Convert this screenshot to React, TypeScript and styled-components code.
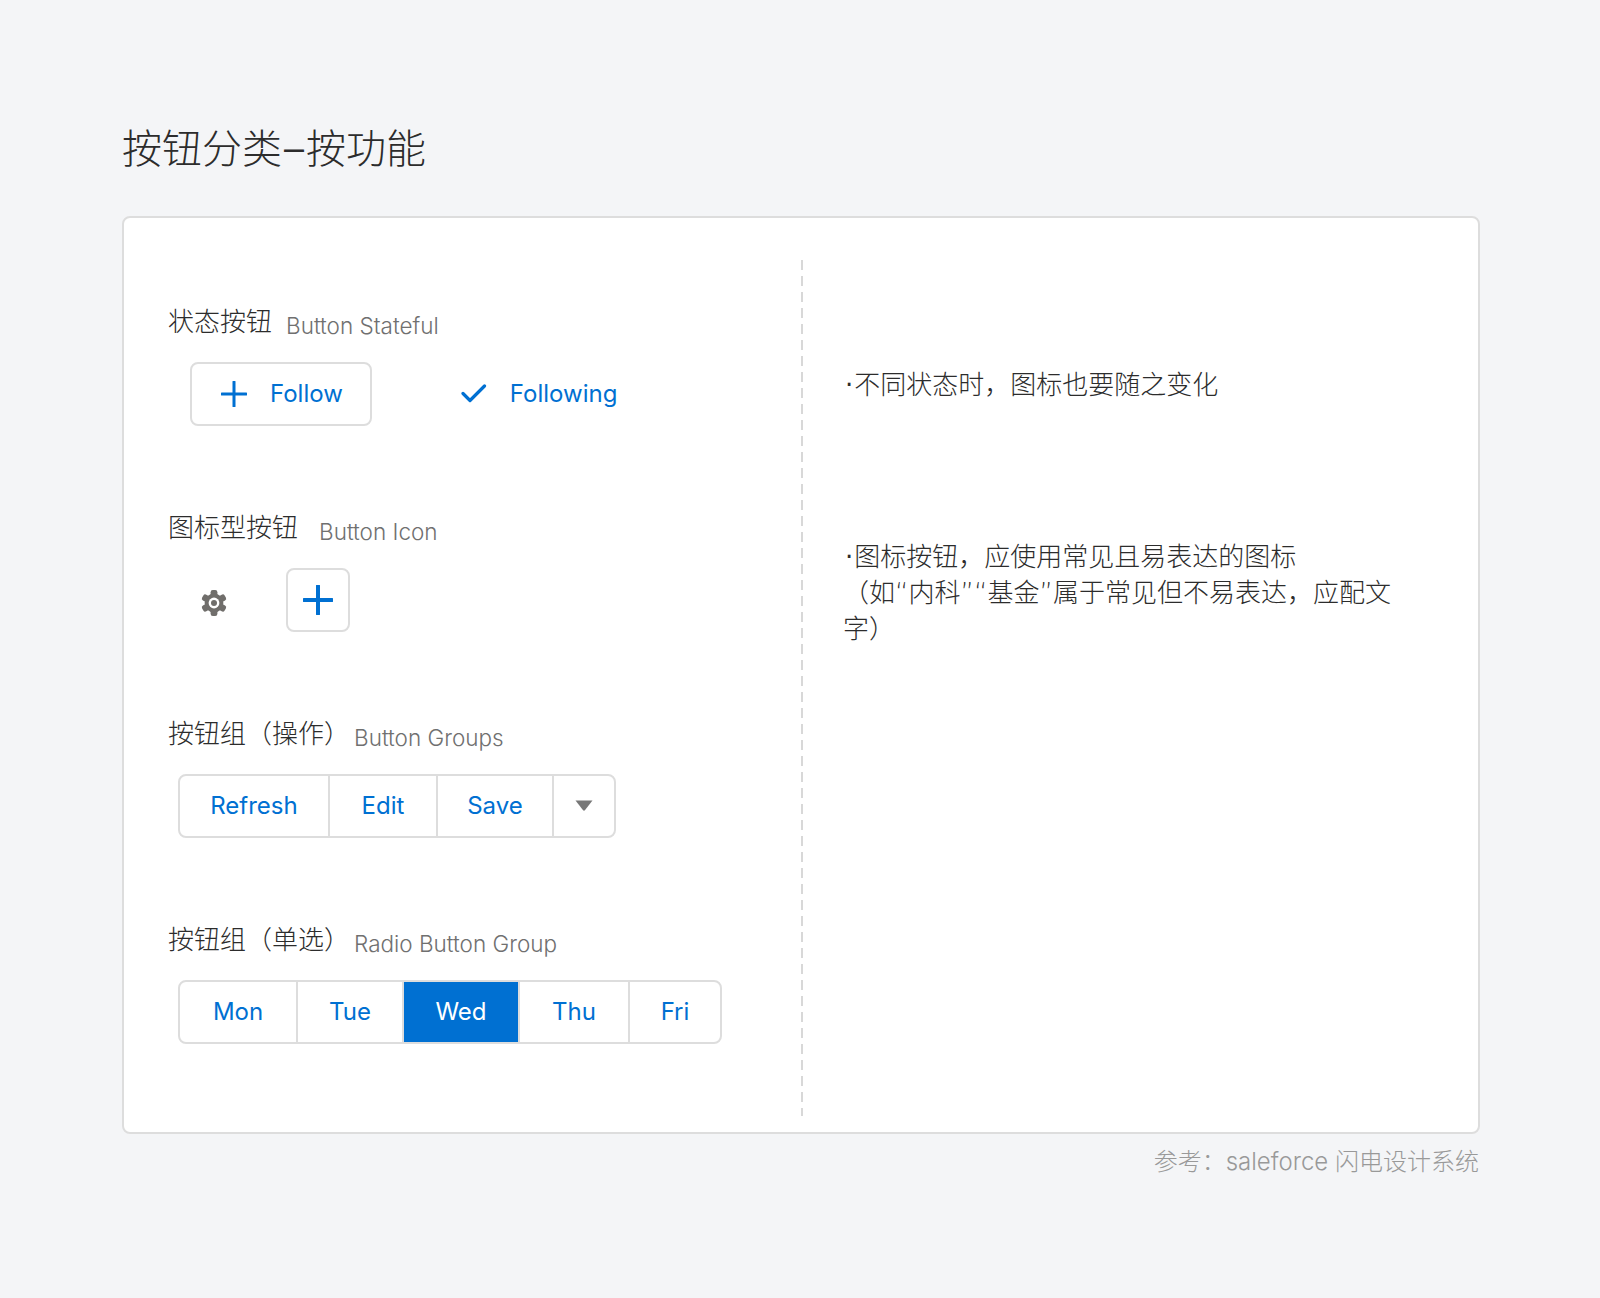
import styled, { createGlobalStyle } from "styled-components";

const GlobalStyle = createGlobalStyle`
  html, body {
    margin: 0;
    padding: 0;
    background: #f4f5f7;
  }
  body {
    font-family: "Inter", "Noto Sans CJK SC", sans-serif;
    -webkit-font-smoothing: antialiased;
  }
`;

const BLUE = "#0070d2";
const LINE = "#dddddd";
const INK = "#2c2c2c";

const Page = styled.div`
  width: 1600px;
  height: 1298px;
  box-sizing: border-box;
  padding: 120px 120px 0 122px;
`;

const Title = styled.h1`
  margin: 0 0 38px;
  height: 58px;
  font-size: 40px;
  line-height: 58px;
  font-weight: 300;
  color: ${INK};
`;

const TitleDash = styled.span`
  margin: 0 2px;
`;

const Card = styled.div`
  box-sizing: border-box;
  height: 918px;
  display: grid;
  grid-template-columns: 677px 2px 1fr;
  grid-template-rows: 856px;
  background: #ffffff;
  border: 2px solid ${LINE};
  border-radius: 8px;
  padding: 42px 0 16px;
`;

const LeftColumn = styled.div`
  padding: 42px 0 0 44px;
`;

const Divider = styled.div`
  background: repeating-linear-gradient(
    to bottom,
    #d8d8d8 0,
    #d8d8d8 10px,
    transparent 10px,
    transparent 16px
  );
`;

const RightColumn = styled.div`
  padding: 107px 75px 0 40px;
`;

const Section = styled.section`
  height: 206px;
`;

const Heading = styled.div`
  display: flex;
  align-items: flex-start;
  height: 60px;
`;

const HeadingCn = styled.span`
  font-size: 26px;
  line-height: 40px;
  font-weight: 300;
  color: ${INK};
`;

const HeadingEn = styled.span<{ $gap: number }>`
  margin: 4px 0 0 ${(p) => p.$gap}px;
  font-size: 22.5px;
  line-height: 40px;
  font-weight: 300;
  color: #707070;
`;

const Row = styled.div<{ $indent: number }>`
  display: flex;
  align-items: center;
  margin-left: ${(p) => p.$indent}px;
`;

const StateButton = styled.div<{ $outlined?: boolean }>`
  box-sizing: border-box;
  height: 64px;
  display: flex;
  align-items: center;
  gap: 23px;
  padding: 0 27px 1px 29px;
  margin-right: 58px;
  border: 2px solid ${(p) => (p.$outlined ? LINE : "transparent")};
  border-radius: 8px;
  font-size: 24px;
  font-weight: 400;
  color: ${BLUE};
`;

const GearSlot = styled.div`
  width: 72px;
  height: 64px;
  margin-right: 36px;
  padding-top: 6px;
  box-sizing: border-box;
  display: flex;
  align-items: center;
  justify-content: center;
`;

const IconButton = styled.div`
  box-sizing: border-box;
  width: 64px;
  height: 64px;
  display: flex;
  align-items: center;
  justify-content: center;
  border: 2px solid ${LINE};
  border-radius: 8px;
`;

const Group = styled.div`
  display: inline-flex;
  height: 64px;
  box-sizing: border-box;
  border: 2px solid ${LINE};
  border-radius: 8px;
  overflow: hidden;
`;

const Segment = styled.div<{ $active?: boolean; $width: number }>`
  box-sizing: border-box;
  width: ${(p) => p.$width}px;
  display: flex;
  align-items: center;
  justify-content: center;
  padding-bottom: 1px;
  font-size: 24px;
  font-weight: 400;
  color: ${(p) => (p.$active ? "#ffffff" : BLUE)};
  background: ${(p) => (p.$active ? BLUE : "transparent")};
  & + & {
    border-left: 2px solid ${LINE};
  }
`;

const Note = styled.p<{ $gap: number }>`
  margin: 0 0 ${(p) => p.$gap}px;
  font-family: "DejaVu Sans", "Noto Sans CJK SC", sans-serif;
  font-size: 26px;
  line-height: 36px;
  font-weight: 300;
  color: ${INK};
`;

const Bullet = styled.span`
  padding: 0 1px 0 2px;
  font-weight: 400;
`;

const Source = styled.div`
  margin-top: 11px;
  padding-right: 1px;
  text-align: right;
  font-size: 24px;
  line-height: 34px;
  font-weight: 300;
  color: #999999;
`;

const PlusIcon = ({ size, weight }: { size: number; weight: number }) => (
  <svg width={size} height={size} viewBox="0 0 30 30" fill="none">
    <path
      d="M15 1v28M1 15h28"
      stroke={BLUE}
      strokeWidth={(weight * 30) / size}
      strokeLinecap="round"
    />
  </svg>
);

const CheckIcon = () => (
  <svg width="26" height="20" viewBox="0 0 26 20" fill="none">
    <path
      d="M2 9.5l7 7L23.5 2"
      stroke={BLUE}
      strokeWidth="3.2"
      strokeLinecap="round"
      strokeLinejoin="round"
    />
  </svg>
);

const GEAR = "#706e6b";

const GearIcon = () => (
  <svg width="26" height="28" viewBox="0 0 26 28">
    <circle cx="13" cy="14" r="9.4" fill={GEAR} />
    {[0, 60, 120, 180, 240, 300].map((angle) => (
      <rect
        key={angle}
        x="9.6"
        y="1"
        width="6.8"
        height="8"
        rx="2.2"
        fill={GEAR}
        transform={`rotate(${angle} 13 14)`}
      />
    ))}
    <circle cx="13" cy="14" r="5.4" fill="#ffffff" />
    <circle cx="13" cy="14" r="3" fill={GEAR} />
  </svg>
);

const CaretIcon = () => (
  <svg width="18" height="11" viewBox="0 0 18 11">
    <path d="M0.5 0.5h17l-7.6 9.8c-.5 .5-1.3 .5-1.8 0z" fill="#777777" />
  </svg>
);

const actions = [
  { label: "Refresh", width: 148 },
  { label: "Edit", width: 108 },
  { label: "Save", width: 116 },
];

const days = [
  { label: "Mon", width: 116 },
  { label: "Tue", width: 106 },
  { label: "Wed", width: 116 },
  { label: "Thu", width: 110 },
  { label: "Fri", width: 92 },
];

export default function App() {
  return (
    <Page>
      <GlobalStyle />
      <Title>
        按钮分类<TitleDash>–</TitleDash>按功能
      </Title>
      <Card>
        <LeftColumn>
          <Section>
            <Heading>
              <HeadingCn>状态按钮</HeadingCn>
              <HeadingEn $gap={14}>Button Stateful</HeadingEn>
            </Heading>
            <Row $indent={22}>
              <StateButton $outlined>
                <PlusIcon size={26} weight={3} />
                Follow
              </StateButton>
              <StateButton>
                <CheckIcon />
                Following
              </StateButton>
            </Row>
          </Section>
          <Section>
            <Heading>
              <HeadingCn>图标型按钮</HeadingCn>
              <HeadingEn $gap={21}>Button Icon</HeadingEn>
            </Heading>
            <Row $indent={10}>
              <GearSlot>
                <GearIcon />
              </GearSlot>
              <IconButton>
                <PlusIcon size={30} weight={4} />
              </IconButton>
            </Row>
          </Section>
          <Section>
            <Heading>
              <HeadingCn>按钮组（操作）</HeadingCn>
              <HeadingEn $gap={4}>Button Groups</HeadingEn>
            </Heading>
            <Row $indent={10}>
              <Group>
                {actions.map((action) => (
                  <Segment key={action.label} $width={action.width}>
                    {action.label}
                  </Segment>
                ))}
                <Segment $width={62}>
                  <CaretIcon />
                </Segment>
              </Group>
            </Row>
          </Section>
          <Section>
            <Heading>
              <HeadingCn>按钮组（单选）</HeadingCn>
              <HeadingEn $gap={4}>Radio Button Group</HeadingEn>
            </Heading>
            <Row $indent={10}>
              <Group>
                {days.map((day) => (
                  <Segment
                    key={day.label}
                    $width={day.width}
                    $active={day.label === "Wed"}
                  >
                    {day.label}
                  </Segment>
                ))}
              </Group>
            </Row>
          </Section>
        </LeftColumn>
        <Divider />
        <RightColumn>
          <Note $gap={136}>
            <Bullet>·</Bullet>不同状态时，图标也要随之变化
          </Note>
          <Note $gap={0}>
            <Bullet>·</Bullet>图标按钮，应使用常见且易表达的图标
            <br />
            （如“内科”“基金”属于常见但不易表达，应配文字）
          </Note>
        </RightColumn>
      </Card>
      <Source>参考：saleforce 闪电设计系统</Source>
    </Page>
  );
}
